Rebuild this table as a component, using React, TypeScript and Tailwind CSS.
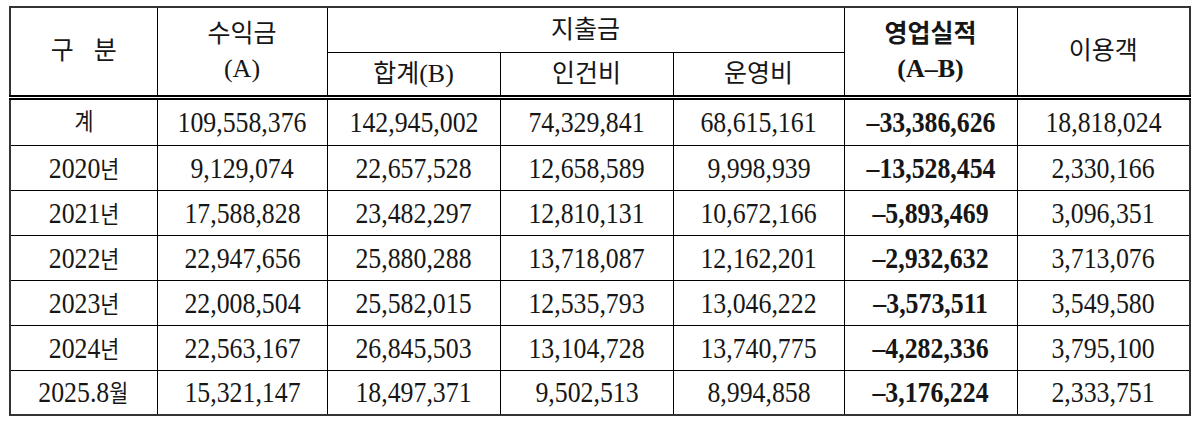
const rows: string[][] = [
  ["계", "109,558,376", "142,945,002", "74,329,841", "68,615,161", "–33,386,626", "18,818,024"],
  ["2020년", "9,129,074", "22,657,528", "12,658,589", "9,998,939", "–13,528,454", "2,330,166"],
  ["2021년", "17,588,828", "23,482,297", "12,810,131", "10,672,166", "–5,893,469", "3,096,351"],
  ["2022년", "22,947,656", "25,880,288", "13,718,087", "12,162,201", "–2,932,632", "3,713,076"],
  ["2023년", "22,008,504", "25,582,015", "12,535,793", "13,046,222", "–3,573,511", "3,549,580"],
  ["2024년", "22,563,167", "26,845,503", "13,104,728", "13,740,775", "–4,282,336", "3,795,100"],
  ["2025.8월", "15,321,147", "18,497,371", "9,502,513", "8,994,858", "–3,176,224", "2,333,751"],
];

// digits in serif, hangul smaller so the mix looks like the original batang text
function Cell({ text, bold }: { text: string; bold?: boolean }) {
  const parts = text.split(/([가-힣]+)/).filter(Boolean);
  return (
    <span className={`inline-block scale-x-[0.86] ${bold ? "font-bold" : ""}`}>
      {parts.map((p, i) =>
        /[가-힣]/.test(p) ? (
          <span key={i} className="text-[24px]">{p}</span>
        ) : (
          <span key={i} className="text-[30px]">{p}</span>
        )
      )}
    </span>
  );
}

export default function App() {
  const th = "border border-black font-normal align-middle text-center leading-[1.35]";
  return (
    <div className="w-[1200px] h-[424px] bg-white pl-[9px] pt-[6px] font-['Liberation_Serif','Noto_Sans_CJK_KR',serif] text-[#161616]">
      <table className="table-fixed border-collapse border-2 border-[#333] w-[1180px]">
        <colgroup>
          <col className="w-[147px]" />
          <col className="w-[170px]" />
          <col className="w-[173px]" />
          <col className="w-[173px]" />
          <col className="w-[171px]" />
          <col className="w-[173px]" />
          <col className="w-[173px]" />
        </colgroup>
        <thead>
          <tr className="h-[45px]">
            <th rowSpan={2} className={`${th} text-[25px]`}>
              구<span className="inline-block w-[20px]" />분
            </th>
            <th rowSpan={2} className={`${th} text-[25px]`}>
              수익금
              <br />
              <span className="text-[26px]">(A)</span>
            </th>
            <th colSpan={3} className={`${th} text-[25px]`}>지출금</th>
            <th rowSpan={2} className={`${th} text-[25px] !font-bold`}>
              영업실적
              <br />
              <span className="text-[26px]">(A–B)</span>
            </th>
            <th rowSpan={2} className={`${th} text-[25px]`}>이용객</th>
          </tr>
          <tr className="h-[45px]">
            <th className={`${th} text-[25px]`}>
              합계<span className="text-[26px]">(B)</span>
            </th>
            <th className={`${th} text-[25px]`}>인건비</th>
            <th className={`${th} text-[25px]`}>운영비</th>
          </tr>
        </thead>
        <tbody>
          {rows.map((r, ri) => (
            <tr key={ri} className={ri === 0 ? "h-[48px]" : "h-[45px]"}>
              {r.map((c, ci) => (
                <td
                  key={ci}
                  className={`border border-black text-center align-middle leading-none ${
                    ri === 0 ? "border-t-[5px] border-t-black border-double" : ""
                  }`}
                >
                  <Cell text={c} bold={ci === 5} />
                </td>
              ))}
            </tr>
          ))}
        </tbody>
      </table>
    </div>
  );
}
